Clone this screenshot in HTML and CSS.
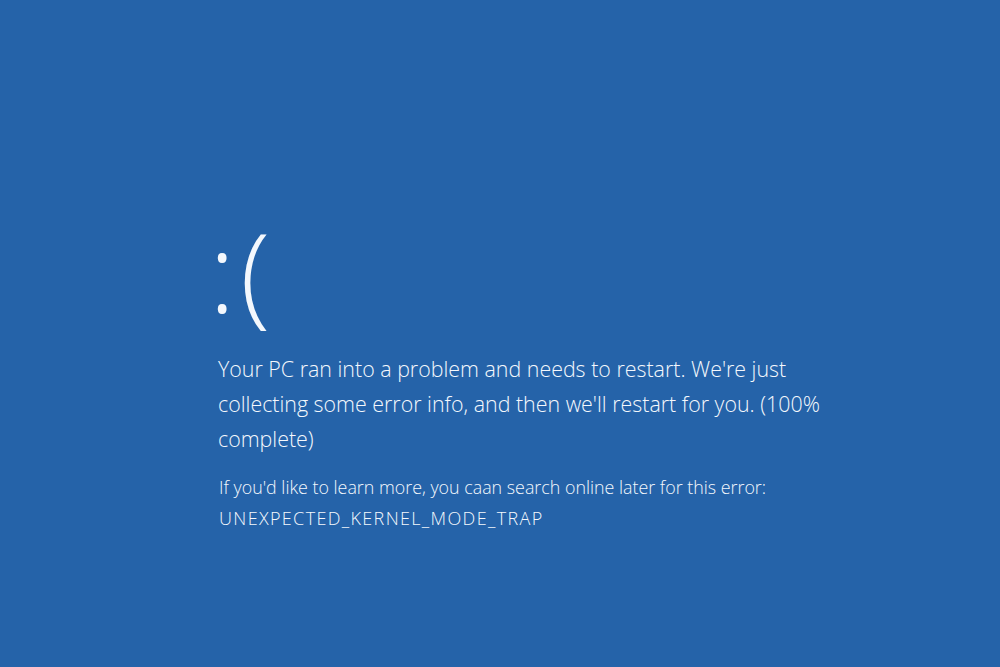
FILE: index.html
```html
<!DOCTYPE html>
<html lang="en">
<head>
<meta charset="utf-8">
<title>Your PC ran into a problem</title>
<link rel="stylesheet" href="styles.css">
</head>
<body>
<main class="screen">
  <div class="face">:(</div>
  <p class="message">Your PC ran into a problem and needs to restart. We're just collecting some error info, and then we'll restart for you. (100% complete)</p>
  <div class="details">
    <p class="hint">If you'd like to learn more, you caan search online later for this error:</p>
    <p class="code">UNEXPECTED_KERNEL_MODE_TRAP</p>
  </div>
</main>
</body>
</html>
```

FILE: styles.css
```css
html, body {
  margin: 0;
  padding: 0;
  height: 100%;
}
body {
  background: #2563a9;
  color: #f4f8fd;
  font-family: "Open Sans", "Noto Sans", sans-serif;
  font-weight: 300;
}
.screen {
  box-sizing: border-box;
  height: 100%;
  padding: 215px 0 0 218px;
}
.face {
  font-size: 110px;
  line-height: 110px;
  font-weight: 300;
  letter-spacing: 5px;
  margin: 0 0 26px -9px;
}
.message {
  margin: 0;
  width: 640px;
  font-size: 21.4px;
  line-height: 35px;
}
.details {
  margin: 16px 0 0 1px;
}
.hint, .code {
  margin: 0;
  line-height: 31px;
}
.hint {
  font-size: 17.85px;
}
.code {
  font-size: 18px;
  letter-spacing: 1.35px;
}
```
